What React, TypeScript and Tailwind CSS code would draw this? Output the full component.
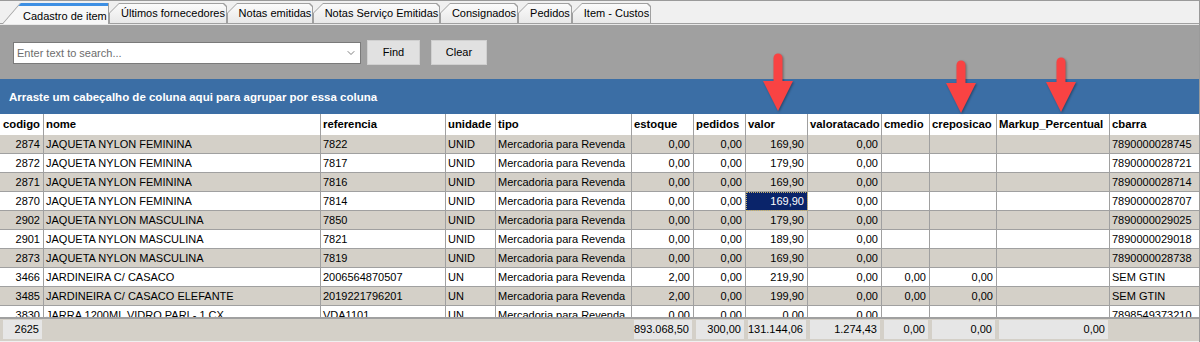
import { ChevronDown } from 'lucide-react'

type Col = { label: string; right?: boolean }

const COLS: Col[] = [
    { label: 'codigo', right: true },
    { label: 'nome' },
    { label: 'referencia' },
    { label: 'unidade' },
    { label: 'tipo' },
    { label: 'estoque', right: true },
    { label: 'pedidos', right: true },
    { label: 'valor', right: true },
    { label: 'valoratacado', right: true },
    { label: 'cmedio', right: true },
    { label: 'creposicao', right: true },
    { label: 'Markup_Percentual', right: true },
    { label: 'cbarra' },
]

const GRID_COLS = 'grid grid-cols-[44px_277px_125px_50px_136px_62px_52px_62px_74px_48px_67px_113px_1fr]'

const MR = 'Mercadoria para Revenda'
const FEM = 'JAQUETA NYLON FEMININA'
const MAS = 'JAQUETA NYLON MASCULINA'

const ROWS: string[][] = [
    ['2874', FEM, '7822', 'UNID', MR, '0,00', '0,00', '169,90', '0,00', '', '', '', '7890000028745'],
    ['2872', FEM, '7817', 'UNID', MR, '0,00', '0,00', '179,90', '0,00', '', '', '', '7890000028721'],
    ['2871', FEM, '7816', 'UNID', MR, '0,00', '0,00', '169,90', '0,00', '', '', '', '7890000028714'],
    ['2870', FEM, '7814', 'UNID', MR, '0,00', '0,00', '169,90', '0,00', '', '', '', '7890000028707'],
    ['2902', MAS, '7850', 'UNID', MR, '0,00', '0,00', '179,90', '0,00', '', '', '', '7890000029025'],
    ['2901', MAS, '7821', 'UNID', MR, '0,00', '0,00', '189,90', '0,00', '', '', '', '7890000029018'],
    ['2873', MAS, '7819', 'UNID', MR, '0,00', '0,00', '169,90', '0,00', '', '', '', '7890000028738'],
    ['3466', 'JARDINEIRA C/ CASACO', '2006564870507', 'UN', MR, '2,00', '0,00', '219,90', '0,00', '0,00', '0,00', '', 'SEM GTIN'],
    ['3485', 'JARDINEIRA C/ CASACO ELEFANTE', '2019221796201', 'UN', MR, '2,00', '0,00', '199,90', '0,00', '0,00', '0,00', '', 'SEM GTIN'],
    ['3830', 'JARRA 1200ML VIDRO PARI - 1 CX', 'VDA1101', 'UN', MR, '0,00', '0,00', '0,00', '0,00', '', '', '', '7898549373210'],
]

const TOTALS = ['2625', '', '', '', '', '893.068,50', '300,00', '131.144,06', '1.274,43', '0,00', '0,00', '0,00', '']

const TABS = [
    { label: 'Últimos fornecedores', w: 'w-[118px]' },
    { label: 'Notas emitidas', w: 'w-[86px]' },
    { label: 'Notas Serviço Emitidas', w: 'w-[127px]' },
    { label: 'Consignados', w: 'w-[78px]' },
    { label: 'Pedidos', w: 'w-[54px]' },
    { label: 'Item - Custos', w: 'w-[79px]' },
]

function Tab({ label, w }: { label: string; w: string }) {
    return (
        <div className={`relative h-[20px] ${w} shrink-0 bg-[#a0a0a0] [clip-path:polygon(0_100%,0_10px,10px_0,calc(100%-3px)_0,100%_3px,100%_100%)]`}>
            <div className="absolute left-[1px] right-[1px] top-[1px] bottom-0 bg-gradient-to-b from-[#fbfbfb] to-[#e8e8e8] [clip-path:polygon(0_100%,0_9px,9px_0,calc(100%-3px)_0,100%_3px,100%_100%)]" />
            <span className="relative block pl-[10px] pt-[5px] text-center whitespace-nowrap">{label}</span>
        </div>
    )
}

function Arrow({ className, y1 }: { className: string; y1: number }) {
    return (
        <svg
            className={`absolute ${className} drop-shadow-[1px_1px_1px_rgba(0,0,0,0.35)]`}
            width="36"
            height="62"
            viewBox="0 0 36 62"
        >
            <line x1="18" y1={y1} x2="18" y2="32" stroke="#f94343" strokeWidth="9" strokeLinecap="round" />
            <polygon points="3,29 33,29 18,59" fill="#f94343" />
        </svg>
    )
}

function App() {
    return (
        <div className="relative w-[1200px] h-[342px] overflow-hidden bg-[#f0f0f0] border-t border-r border-[#9a9a9a] font-['Liberation_Sans',Arial,sans-serif] text-[11px] text-black leading-none">
            {/* tabs */}
            <div className="flex items-end h-[23px] pl-[2px] border-b border-[#a0a0a0]">
                <div className="relative w-[107px] h-[21px] -mb-[1px] shrink-0 bg-[#a0a0a0] [clip-path:polygon(0_100%,18px_0,100%_0,100%_100%)]">
                    <div className="absolute left-[1px] right-[1px] top-0 bottom-0 bg-[#f7f7f7] [clip-path:polygon(0_100%,18px_0,100%_0,100%_100%)]">
                        <div className="h-[3px] bg-[#3d8fe3]" />
                    </div>
                    <span className="relative block pl-[21px] pt-[8px] whitespace-nowrap">Cadastro de item</span>
                </div>
                {TABS.map((t) => (
                    <Tab key={t.label} label={t.label} w={t.w} />
                ))}
            </div>

            {/* search panel */}
            <div className="flex items-start h-[55px] pl-[13px] pt-[15px] bg-[#a0a0a0] border-t border-[#e8e8e8]">
                <div className="mt-[2px] w-[348px] h-[22px] flex items-center justify-between bg-white border border-[#7a7a7a] pl-[3px] pr-[3px]">
                    <span className="text-[#6d6d6d]">Enter text to search...</span>
                    <ChevronDown size={12} strokeWidth={1.5} color="#555" />
                </div>
                <button className="ml-[6px] w-[53px] h-[25px] bg-[#e1e1e1] border border-[#d0d0d0]">Find</button>
                <button className="ml-[11px] w-[56px] h-[25px] bg-[#e1e1e1] border border-[#d0d0d0]">Clear</button>
            </div>

            {/* group by band */}
            <div className="h-[35px] flex items-center pl-[9px] pt-[2px] bg-[#3b6ea5] text-white font-bold text-[11.5px]">
                Arraste um cabeçalho de coluna aqui para agrupar por essa coluna
            </div>

            {/* header */}
            <div className={`${GRID_COLS} h-[21px] bg-white font-bold text-[11.3px]`}>
                {COLS.map((c, i) => (
                    <div
                        key={c.label}
                        className={`flex items-center whitespace-nowrap overflow-hidden ${i === 0 ? 'pl-[3px]' : 'pl-[2px]'} ${i < COLS.length - 1 ? 'border-r border-[#a0a0a0]' : ''}`}
                    >
                        {c.label}
                    </div>
                ))}
            </div>

            {/* body */}
            <div className="h-[182px] overflow-hidden">
                {ROWS.map((row, r) => (
                    <div key={r} className={`${GRID_COLS} h-[19px] ${r % 2 === 0 ? 'bg-[#d4d0c8]' : 'bg-white'}`}>
                        {row.map((v, c) => {
                            const selected = r === 3 && c === 7
                            return (
                                <div
                                    key={c}
                                    className={`flex items-center whitespace-nowrap overflow-hidden border-b border-[#a0a0a0] ${c < row.length - 1 ? 'border-r' : ''} ${COLS[c].right ? 'justify-end pr-[3px]' : 'pl-[2px]'} ${selected ? 'bg-[#0a246a] text-white outline-1 outline-dotted outline-[#c9b46a] -outline-offset-1' : ''}`}
                                >
                                    {v}
                                </div>
                            )
                        })}
                    </div>
                ))}
            </div>

            {/* footer totals */}
            <div className={`${GRID_COLS} h-[24px] bg-[#d4d0c8] border-t-2 border-[#a0a0a0]`}>
                {TOTALS.map((v, i) => (
                    <div key={i} className="pt-[1px]">
                        {v !== '' && (
                            <div className={`h-[19px] flex items-center justify-end pr-[3px] bg-[#e6e6e6] ${i === 0 ? 'ml-[3px] mr-[2px]' : 'mx-[2px]'}`}>
                                {v}
                            </div>
                        )}
                    </div>
                ))}
            </div>

            <Arrow className="left-[760px] top-[51px]" y1={6} />
            <Arrow className="left-[943px] top-[53px]" y1={11} />
            <Arrow className="left-[1043px] top-[52px]" y1={9} />
        </div>
    )
}

export default App
